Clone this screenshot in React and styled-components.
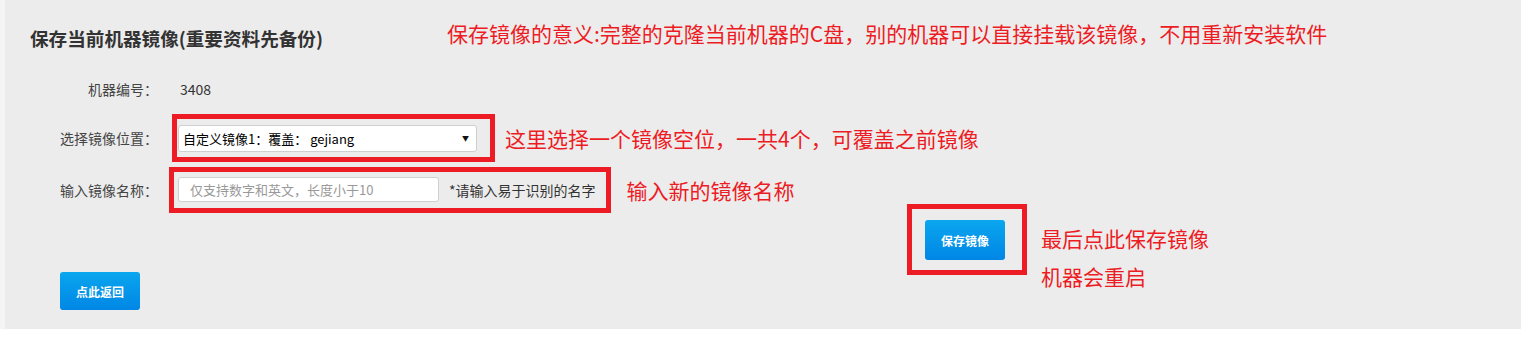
import styled, { createGlobalStyle } from "styled-components";

const GlobalStyle = createGlobalStyle`
  body {
    margin: 0;
    background: #fff;
    font-family: "Microsoft YaHei", "Noto Sans CJK SC", "Liberation Sans", sans-serif;
  }
`;

const Page = styled.div`
  background: #f4f4f4;
  padding-left: 5px;
`;

const Panel = styled.div`
  background: #ececec;
  padding-bottom: 18px;
`;

const Header = styled.div`
  display: flex;
  align-items: flex-start;
  padding: 19px 0 0 25px;
`;

const Title = styled.h2`
  width: 417px;
  margin: 7px 0 0 0;
  font-size: 18.6px;
  line-height: 24px;
  font-weight: bold;
  color: #333;
`;

const Note = styled.div`
  margin-left: ${(p) => p.offset || 0}px;
  font-size: 21px;
  line-height: ${(p) => p.lh || 28}px;
  color: #ed1c24;
  white-space: nowrap;
`;

const Form = styled.div`
  padding-left: 55px;
`;

const Row = styled.div`
  display: flex;
  align-items: center;
  margin-top: ${(p) => p.top}px;
`;

const Label = styled.div`
  width: 98px;
  text-align: right;
  font-size: 14px;
  line-height: 20px;
  color: #444;
  flex-shrink: 0;
`;

const Value = styled.div`
  margin-left: 22px;
  font-size: 14px;
  line-height: 20px;
  color: #333;
`;

const Marked = styled.div`
  display: flex;
  align-items: center;
  margin-left: ${(p) => p.offset}px;
  border: 5px solid #ed1c24;
  padding: ${(p) => p.pad};
`;

const SelectWrap = styled.div`
  position: relative;
  width: 299px;
  height: 27px;
`;

const Select = styled.select`
  appearance: none;
  width: 100%;
  height: 100%;
  box-sizing: border-box;
  border: 1px solid #cfcfcf;
  border-radius: 3px;
  background: #fff;
  padding: 0 0 0 4px;
  font-family: inherit;
  font-size: 13px;
  color: #000;
  outline: none;
`;

const Caret = styled.span`
  position: absolute;
  right: 8px;
  top: 9px;
  font-size: 7px;
  line-height: 8px;
  color: #111;
  pointer-events: none;
`;

const Input = styled.input`
  width: 261px;
  height: 25px;
  box-sizing: border-box;
  border: 1px solid #d0d0d0;
  border-radius: 3px;
  background: #fff;
  padding: 0 0 0 11px;
  font-family: inherit;
  font-size: 13px;
  outline: none;

  &::placeholder {
    color: #999;
  }
`;

const Hint = styled.span`
  margin-left: 10px;
  font-size: 14px;
  line-height: 20px;
  color: #333;
  white-space: nowrap;
`;

const Button = styled.button`
  width: 80px;
  height: ${(p) => p.h || 38}px;
  border: none;
  border-radius: 3px;
  background: linear-gradient(#0aa6ef, #0086e5);
  color: #fff;
  font-family: inherit;
  font-size: 12px;
  font-weight: bold;
  cursor: pointer;
`;

const SaveWrap = styled.div`
  position: relative;
  margin-left: 865px;
  width: 80px;

  &::after {
    content: "";
    position: absolute;
    top: -16px;
    left: -18px;
    right: -22px;
    bottom: -15px;
    border: 5px solid #ed1c24;
    pointer-events: none;
  }
`;

const SaveNote = styled.div`
  position: absolute;
  left: 116px;
  top: -1px;
`;

const BackRow = styled.div`
  margin-top: 12px;
  padding-bottom: 1px;
`;

export default function App() {
  return (
    <Page>
      <GlobalStyle />
      <Panel>
        <Header>
          <Title>保存当前机器镜像(重要资料先备份)</Title>
          <Note>保存镜像的意义:完整的克隆当前机器的C盘，别的机器可以直接挂载该镜像，不用重新安装软件</Note>
        </Header>
        <Form>
          <Row top={29}>
            <Label>机器编号：</Label>
            <Value>3408</Value>
          </Row>
          <Row top={15}>
            <Label>选择镜像位置：</Label>
            <Marked offset={14} pad="6px 13px 5px 1px">
              <SelectWrap>
                <Select defaultValue="1">
                  <option value="1">自定义镜像1：覆盖： gejiang</option>
                  <option value="2">自定义镜像2</option>
                  <option value="3">自定义镜像3</option>
                  <option value="4">自定义镜像4</option>
                </Select>
                <Caret>▼</Caret>
              </SelectWrap>
            </Marked>
            <Note offset={10}>这里选择一个镜像空位，一共4个，可覆盖之前镜像</Note>
          </Row>
          <Row top={5}>
            <Label>输入镜像名称：</Label>
            <Marked offset={11} pad="5px 10px 6px 4px">
              <Input placeholder="仅支持数字和英文，长度小于10" />
              <Hint>*请输入易于识别的名字</Hint>
            </Marked>
            <Note offset={16}>输入新的镜像名称</Note>
          </Row>
          <Row top={7}>
            <SaveWrap>
              <Button h={40}>保存镜像</Button>
              <SaveNote>
                <Note lh={38}>最后点此保存镜像</Note>
                <Note lh={38}>机器会重启</Note>
              </SaveNote>
            </SaveWrap>
          </Row>
          <BackRow>
            <Button h={38}>点此返回</Button>
          </BackRow>
        </Form>
      </Panel>
    </Page>
  );
}
